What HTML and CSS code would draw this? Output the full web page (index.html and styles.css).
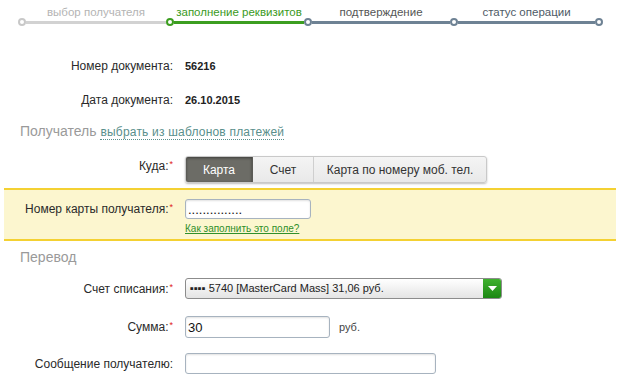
FILE: index.html
```html
<!DOCTYPE html>
<html lang="ru">
<head>
  <meta charset="UTF-8" />
  <title>Перевод</title>
  <link rel="stylesheet" href="styles.css">
</head>
<body>
  <div class="steps">
    <div class="step-labels">
      <span class="s1 done">выбор получателя</span>
      <span class="s2 current">заполнение реквизитов</span>
      <span class="s3">подтверждение</span>
      <span class="s4">статус операции</span>
    </div>
    <div class="step-track">
      <i class="dot done"></i><b class="line l1 done"></b>
      <i class="dot current"></i><b class="line l2 current"></b>
      <i class="dot"></i><b class="line l3"></b>
      <i class="dot"></i><b class="line l4"></b>
      <i class="dot"></i>
    </div>
  </div>

  <div class="row doc first">
    <label>Номер документа:</label>
    <strong>56216</strong>
  </div>
  <div class="row doc second">
    <label>Дата документа:</label>
    <strong>26.10.2015</strong>
  </div>

  <h3 class="section recipient">Получатель <a class="dotted" href="#">выбрать из шаблонов платежей</a></h3>

  <div class="row where">
    <label>Куда:<sup>*</sup></label>
    <div class="segmented">
      <button class="active">Карта</button>
      <button>Счет</button>
      <button class="wide">Карта по номеру моб. тел.</button>
    </div>
  </div>

  <div class="highlight">
    <div class="row card">
      <label>Номер карты получателя:<sup>*</sup></label>
      <input class="field" type="text" value="..............." />
    </div>
    <div class="row hint">
      <span></span>
      <a href="#">Как заполнить это поле?</a>
    </div>
  </div>

  <h3 class="section transfer">Перевод</h3>

  <div class="row account">
    <label>Счет списания:<sup>*</sup></label>
    <div class="select">
      <span class="select-text">&#9642;&#9642;&#9642;&#9642; 5740 [MasterCard Mass] 31,06 руб.</span>
      <span class="select-btn"><svg width="9" height="5" viewBox="0 0 9 5"><path d="M0 0h9L4.5 5z" fill="#fff"/></svg></span>
    </div>
  </div>

  <div class="row sum">
    <label>Сумма:<sup>*</sup></label>
    <div class="with-unit">
      <input class="field amount" type="text" value="30" />
      <span class="unit">руб.</span>
    </div>
  </div>

  <div class="row message">
    <label>Сообщение получателю:</label>
    <input class="field msg" type="text" value="" />
  </div>
</body>
</html>
```

FILE: styles.css
```css
body {
  margin: 0;
  background: #fff;
  color: #2a2a2a;
  font-family: "Liberation Sans", Arial, sans-serif;
  font-size: 12px;
}

/* steps */
.steps {
  height: 26px;
}

.step-labels {
  display: flex;
  padding: 5px 0 0 22px;
  height: 13px;
  line-height: 14px;
}

.step-labels span {
  text-align: center;
  white-space: nowrap;
  font-size: 11.5px;
}

.step-labels .s1 { width: 148px; color: #b4b4b4; }
.step-labels .s2 { width: 138px; color: #3a9a1c; }
.step-labels .s3 { width: 146px; color: #555; }
.step-labels .s4 { width: 145px; color: #4e5a66; }

.step-track {
  display: flex;
  align-items: center;
  padding-left: 18px;
  height: 8px;
}

.dot {
  width: 8px;
  height: 8px;
  box-sizing: border-box;
  border: 2px solid #6e8294;
  border-radius: 50%;
  background: #fff;
  flex: none;
}

.dot.done { border-color: #c8c8c8; }
.dot.current { border-color: #3c9e20; }

.line {
  height: 3px;
  background: #6e8294;
  flex: none;
}

.line.done { background: #d2d2d2; }
.line.current { background: #3c9e20; }
.l1 { width: 140px; }
.l2 { width: 130px; }
.l3 { width: 138px; }
.l4 { width: 137px; }

/* form rows */
.row {
  display: grid;
  grid-template-columns: 173px auto;
  column-gap: 12px;
  align-items: center;
}

.row label {
  text-align: right;
  color: #2a2a2a;
  white-space: nowrap;
}

.row sup {
  color: #e02020;
  font-size: 9px;
  vertical-align: 3px;
  line-height: 0;
  margin-left: 1px;
}

.doc {
  height: 16px;
}

.doc strong {
  font-size: 11px;
  color: #222;
}

.doc.first { margin-top: 32px; }
.doc.second { margin-top: 18px; }

.section {
  margin: 0;
  padding-left: 20px;
  font-weight: normal;
  font-size: 14px;
  line-height: 18px;
  color: #9a9a9a;
}

.section.recipient { margin-top: 14px; }
.section.transfer { margin-top: 7px; }

.dotted {
  color: #5a8f8c;
  text-decoration: none;
  border-bottom: 1px dotted #5a8f8c;
  font-size: 12px;
  letter-spacing: 0.2px;
}

/* segmented control */
.where {
  margin-top: 15px;
  align-items: start;
}

.where label {
  padding-top: 3px;
}

.segmented {
  display: flex;
  width: 302px;
  height: 27px;
  box-sizing: border-box;
  border: 1px solid #c9c9c9;
  border-radius: 3px;
  background: linear-gradient(#f4f4f4, #e9e9e9);
  box-shadow: 0 1px 2px rgba(0, 0, 0, 0.25);
  overflow: hidden;
}

.segmented button {
  border: none;
  border-right: 1px solid #cfcfcf;
  background: none;
  font-family: inherit;
  font-size: 12px;
  color: #333;
  padding: 0;
  width: 61px;
}

.segmented button.active {
  width: 67px;
  background: #6c6c66;
  color: #fff;
  box-shadow: inset 0 1px 3px rgba(0, 0, 0, 0.45);
  border-right-color: #5a5a55;
}

.segmented button.wide {
  flex: 1;
  border-right: none;
}

/* yellow block */
.highlight {
  margin: 5px 4px 0;
  background: #fcf6cf;
  border-top: 2px solid #f4d132;
  border-bottom: 2px solid #f4d132;
  padding: 9px 0 4px;
}

.highlight .row {
  grid-template-columns: 169px auto;
}

.field {
  box-sizing: border-box;
  height: 21px;
  border: 1px solid #a7b3bf;
  border-radius: 3px;
  background: #fff;
  box-shadow: inset 0 1px 2px rgba(0, 0, 0, 0.12);
  font-family: inherit;
  font-size: 13px;
  color: #111;
  padding: 0 2px;
  outline: none;
}

.card .field {
  width: 126px;
  height: 20px;
}

.hint {
  margin-top: 4px;
  line-height: 12px;
}

.hint a {
  font-size: 10px;
  color: #2f8f2a;
}

/* select */
.account {
  margin-top: 12px;
}

.select {
  display: flex;
  width: 317px;
  height: 21px;
  box-sizing: border-box;
  border: 1px solid #8c8c8c;
  border-radius: 3px;
  background: linear-gradient(#ffffff, #e4e4e4);
  overflow: hidden;
}

.select-text {
  flex: 1;
  padding-left: 4px;
  line-height: 19px;
  font-size: 11px;
  color: #222;
  white-space: nowrap;
}

.select-btn {
  width: 18px;
  display: flex;
  align-items: center;
  justify-content: center;
  background: linear-gradient(#3fb12e, #1b8712);
}

.sum {
  margin-top: 17px;
}

.with-unit {
  display: flex;
  align-items: center;
  gap: 9px;
}

.amount {
  width: 145px;
  height: 22px;
}

.unit {
  color: #444;
  font-size: 11px;
}

.message {
  margin-top: 15px;
}

.msg {
  width: 251px;
}
```
